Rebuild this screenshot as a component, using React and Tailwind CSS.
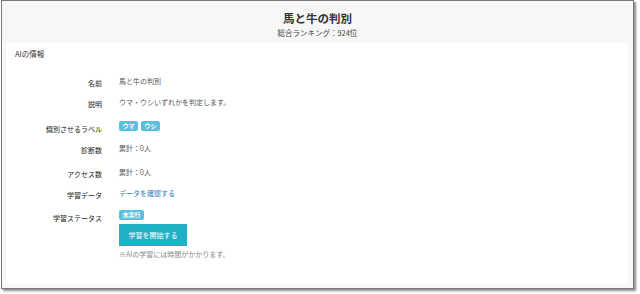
export default function App() {
  const font = { fontFamily: '"Noto Sans CJK JP", "Noto Sans", sans-serif' };
  const rows = [
    { label: "名前", h: "h-[21px]", value: <span className="text-[#555]">馬と牛の判別</span> },
    { label: "説明", h: "h-[25px]", value: <span className="text-[#555]">ウマ・ウシいずれかを判定します。</span> },
    {
      label: "識別させるラベル",
      h: "h-[21px]",
      value: (
        <div className="flex gap-[3px] pt-[0px]">
          <span className="h-[10px] px-[3.5px] rounded-[2px] bg-[#5bc0de] text-white text-[6px] font-bold leading-[10px]">ウマ</span>
          <span className="h-[10px] px-[3.5px] rounded-[2px] bg-[#5bc0de] text-white text-[6px] font-bold leading-[10px]">ウシ</span>
        </div>
      ),
    },
    { label: "診断数", h: "h-[24px]", value: <span className="text-[#555]">累計：0人</span> },
    { label: "アクセス数", h: "h-[21px]", value: <span className="text-[#555]">累計：0人</span> },
    { label: "学習データ", h: "h-[22px]", value: <span className="text-[#337ab7]">データを確認する</span> },
  ];
  return (
    <div className="w-[640px] h-[294px] bg-white" style={font}>
      <div className="ml-[1px] w-[633px] h-[289px] border border-[#7a7a7a] bg-[#f7f7f7] shadow-[2px_2px_2px_rgba(0,0,0,0.45)] flex flex-col">
        <div className="h-[42px] flex flex-col items-center">
          <div className="mt-[9px] text-[11.5px] font-bold leading-[16px] text-[#333]">馬と牛の判別</div>
          <div className="mt-[1px] text-[7.5px] leading-[12px] text-[#444]">総合ランキング：924位</div>
        </div>
        <div className="ml-[4px] mr-[5px] h-[241px] bg-white flex flex-col">
          <div className="mt-[5px] ml-[9px] h-[12px] text-[7.5px] leading-[12px] text-[#333]">AIの情報</div>
          <div className="mt-[15px] flex flex-col text-[7px] leading-[12px]">
            {rows.map((r) => (
              <div key={r.label} className={`flex ${r.h}`}>
                <div className="w-[96px] text-right pt-[2px] text-[#222]">{r.label}</div>
                <div className="ml-[17px]">{r.value}</div>
              </div>
            ))}
            <div className="flex">
              <div className="w-[96px] text-right pt-[3px] text-[#222]">学習ステータス</div>
              <div className="ml-[17px] flex flex-col items-start">
                <span className="mt-[1px] h-[10px] px-[3.5px] rounded-[2px] bg-[#5bc0de] text-white text-[6px] font-bold leading-[10px]">未実行</span>
                <button className="mt-[4px] h-[22px] w-[68px] bg-[#1fb1c6] text-white text-[7px] leading-[22px] text-center">学習を開始する</button>
                <div className="mt-[2px] text-[#888] leading-[12px]">※AIの学習には時間がかかります。</div>
              </div>
            </div>
          </div>
        </div>
      </div>
    </div>
  );
}
